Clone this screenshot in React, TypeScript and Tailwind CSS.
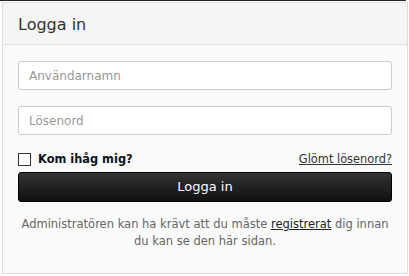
export default function App() {
  return (
    <div className="min-h-screen bg-white pt-px" style={{ fontFamily: '"DejaVu Sans", Verdana, sans-serif' }}>
      <div className="h-px bg-[#222] -mt-px mr-[3px]" />
      <div className="ml-[2px] mr-[1px] mt-px border border-[#dddddd] bg-[#fafafa] h-[272px]">
        {/* Header */}
        <div className="h-[42px] border-b border-[#dddddd] bg-[#f5f5f5] px-[15px] flex items-center">
          <h1 className="text-[16px] text-[#333] pt-[2px]">Logga in</h1>
        </div>

        {/* Form */}
        <form className="px-[15px] pt-[16px]">
          <input
            type="text"
            placeholder="Användarnamn"
            className="block w-full h-[29px] rounded-[3px] border border-[#cccccc] bg-white px-[10px] text-[12px] text-[#555] placeholder:text-[#999] outline-none"
          />
          <input
            type="password"
            placeholder="Lösenord"
            className="mt-[16px] block w-full h-[29px] rounded-[3px] border border-[#cccccc] bg-white px-[10px] text-[12px] text-[#555] placeholder:text-[#999] outline-none"
          />

          <div className="mt-[17px] h-[14px] flex items-center justify-between leading-[14px]">
            <label className="flex items-center gap-[7px]">
              <span className="w-[13px] h-[13px] border border-[#333] bg-white" />
              <span className="text-[11.4px] font-bold text-[#111]">Kom ihåg mig?</span>
            </label>
            <a href="#" className="text-[11.4px] text-[#333] underline">Glömt lösenord?</a>
          </div>

          <button
            type="button"
            className="mt-[6px] w-full h-[30px] rounded-[3px] border border-[#000] bg-gradient-to-b from-[#333] to-[#111] text-white text-[13px]"
          >
            Logga in
          </button>

          <p className="mt-[14px] text-center text-[11.5px] leading-[17px] text-[#666]">
            Administratören kan ha krävt att du måste <a href="#" className="text-[#222] underline">registrerat</a> dig innan du kan se den här sidan.
          </p>
        </form>
      </div>
    </div>
  );
}
